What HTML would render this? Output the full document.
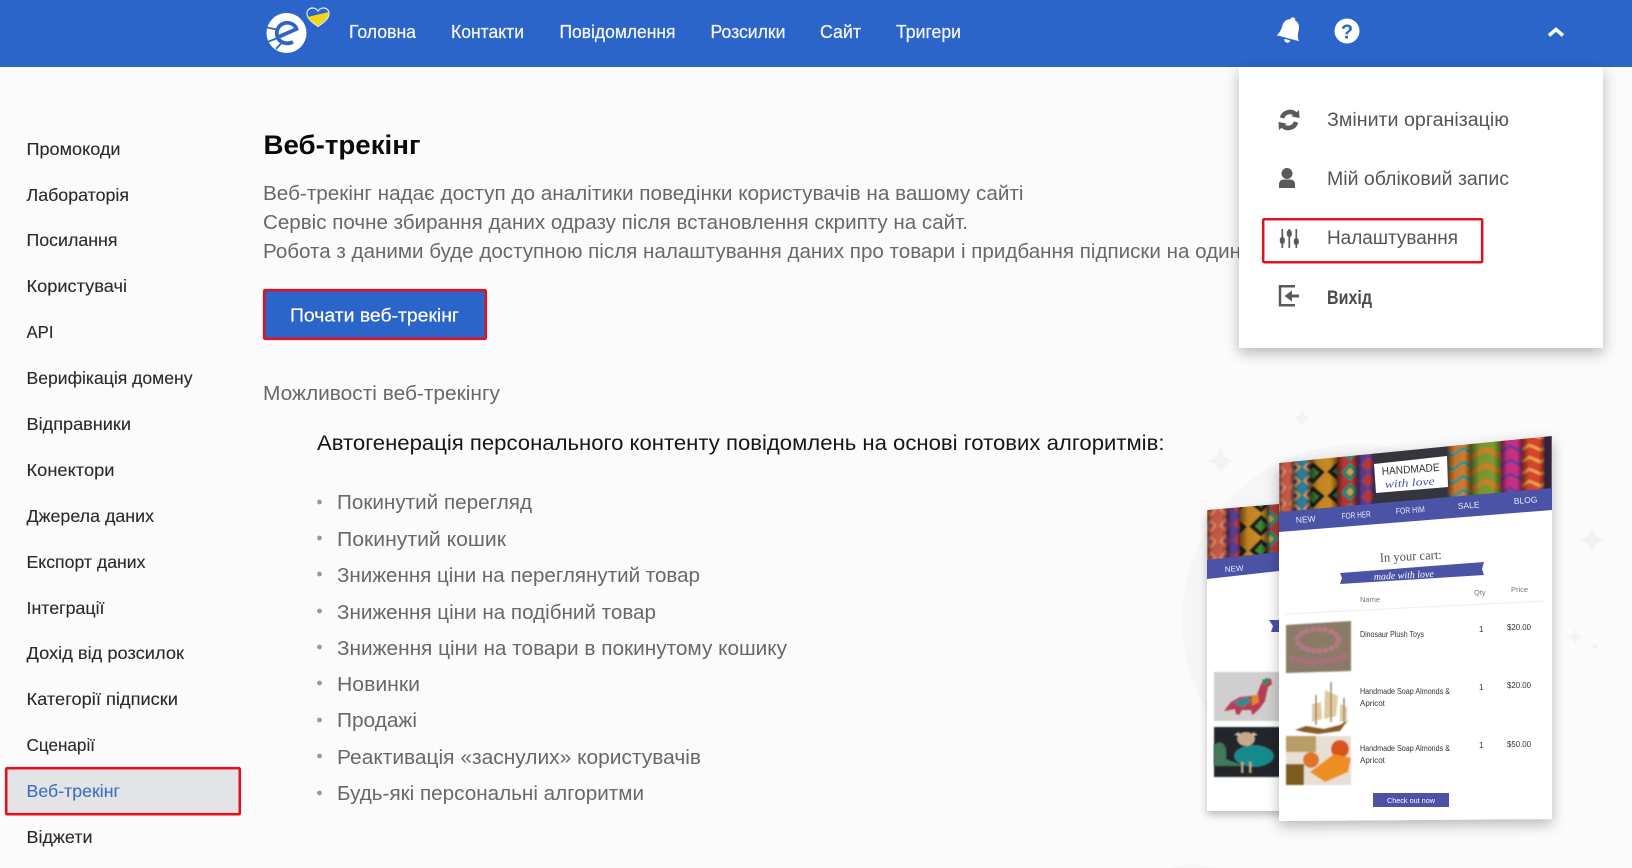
<!DOCTYPE html>
<html lang="uk"><head><meta charset="utf-8"><title>Веб-трекінг</title>
<style>
html,body{margin:0;padding:0;width:1632px;height:868px;overflow:hidden;background:#fbfbfc}
svg{display:block;position:absolute;left:0;top:0}
text{font-family:"Liberation Sans",sans-serif}
.s{font-size:17.5px;fill:#2a2a2a;stroke:#2a2a2a;stroke-width:.12px}
.p{font-size:20px;fill:#686868}
.n{font-size:18.5px;fill:#f2f6fd;stroke:#f2f6fd;stroke-width:.25px}
.d{font-size:19px;fill:#555}
</style></head><body>
<svg width="1632" height="868" viewBox="0 0 1632 868" xmlns="http://www.w3.org/2000/svg">
<defs>
<filter id="sh" x="-20%" y="-20%" width="140%" height="140%"><feDropShadow dx="0" dy="5" stdDeviation="7" flood-color="#000" flood-opacity=".28"/></filter>
<filter id="sh2" x="-20%" y="-20%" width="140%" height="140%"><feDropShadow dx="0" dy="4" stdDeviation="4" flood-color="#000" flood-opacity=".25"/></filter>
<filter id="b"><feGaussianBlur stdDeviation=".9"/></filter>
<linearGradient id="roll"><stop offset="0" stop-color="#000" stop-opacity=".5"/><stop offset=".3" stop-color="#000" stop-opacity=".05"/><stop offset=".75" stop-color="#000" stop-opacity="0"/><stop offset="1" stop-color="#000" stop-opacity=".45"/></linearGradient>
<pattern id="k1" width="14" height="16" patternUnits="userSpaceOnUse" patternTransform="skewY(-5)"><rect width="14" height="16" fill="#c65a4a"/><path d="M7 1l6 7-6 7-6-7z" fill="#d9884f"/><path d="M7 5l3 3-3 3-3-3z" fill="#b05088"/></pattern>
<pattern id="k2" width="14" height="14" patternUnits="userSpaceOnUse" patternTransform="skewY(-5)"><rect width="14" height="14" fill="#2f7f98"/><path d="M7 1l6 6-6 6-6-6z" fill="#d49a35"/><path d="M7 4l3 3-3 3-3-3z" fill="#5a3f8a"/></pattern>
<pattern id="k3" width="26" height="24" patternUnits="userSpaceOnUse" patternTransform="skewY(-5)"><rect width="26" height="24" fill="#c98a24"/><path d="M13 1l12 11-12 11L1 12z" fill="#1e1e18"/><path d="M13 6l6 6-6 6-6-6z" fill="#3d8a3a"/></pattern>
<pattern id="k4" width="20" height="20" patternUnits="userSpaceOnUse" patternTransform="skewY(-5)"><rect width="20" height="20" fill="#b53a32"/><path d="M10 1l9 9-9 9-9-9z" fill="#1f8a7a"/><path d="M10 6l4 4-4 4-4-4z" fill="#d8a038"/></pattern>
<pattern id="k5" width="16" height="16" patternUnits="userSpaceOnUse" patternTransform="skewY(-5)"><rect width="16" height="16" fill="#5c3e90"/><path d="M8 1l7 7-7 7-7-7z" fill="#b5383c"/></pattern>
<pattern id="k6" width="22" height="14" patternUnits="userSpaceOnUse" patternTransform="skewY(-5)"><rect width="22" height="14" fill="#d17a2a"/><path d="M0 9l11-7 11 7" fill="none" stroke="#1f9a94" stroke-width="3"/></pattern>
<pattern id="k7" width="30" height="16" patternUnits="userSpaceOnUse" patternTransform="skewY(-5)"><rect width="30" height="16" fill="#7f9a30"/><path d="M0 11l15-8 15 8" fill="none" stroke="#dd7a26" stroke-width="4"/></pattern>
<pattern id="k8" width="20" height="14" patternUnits="userSpaceOnUse" patternTransform="skewY(-5)"><rect width="20" height="14" fill="#cc2f86"/><path d="M0 10l10-6 10 6" fill="none" stroke="#6b3f9a" stroke-width="3"/></pattern>
<pattern id="k9" width="23" height="12" patternUnits="userSpaceOnUse" patternTransform="skewY(-5)"><rect width="23" height="12" fill="#d8452f"/><path d="M0 9l11.500-6 11.500 6" fill="none" stroke="#efa24a" stroke-width="3"/></pattern>
<clipPath id="hf"><polygon points="1279,463 1552,436 1552,490 1279,514"/></clipPath>
<clipPath id="hb"><polygon points="1207,510 1279,504 1279,554 1207,562"/></clipPath>
</defs>

<!-- background illustration -->
<circle cx="1358" cy="620" r="176" fill="#f6f6f7"/>
<path d="M1168 868q25-7 50 0z" fill="#f6f6f7"/>
<g fill="#f3f3f5">
<path d="M1221 447q2 12 14 14q-12 2-14 14q-2-12-14-14q12-2 14-14z"/>
<path d="M1302 408q1 8 9 10q-8 2-9 10q-1-8-9-10q8-2 9-10z"/>
<path d="M1592 526q2 12 13 14q-11 2-13 15q-2-13-13-15q11-2 13-14z"/>
<path d="M1575 628q1 8 9 9q-8 1-9 9q-1-8-9-9q8-1 9-9z"/>
<circle cx="1595" cy="646" r="3"/>
</g>

<!-- back email card -->
<g filter="url(#sh2)"><polygon points="1207,510 1290,503 1290,811 1207,811" fill="#fff"/></g>
<g clip-path="url(#hb)" filter="url(#b)">
<rect x="1207" y="500" width="20" height="70" fill="url(#k1)"/><rect x="1207" y="500" width="20" height="70" fill="url(#roll)"/>
<rect x="1227" y="500" width="13" height="70" fill="url(#k5)"/><rect x="1227" y="500" width="13" height="70" fill="url(#roll)"/>
<rect x="1240" y="500" width="27" height="70" fill="url(#k3)"/><rect x="1240" y="500" width="27" height="70" fill="url(#roll)"/>
<rect x="1267" y="500" width="14" height="70" fill="url(#k4)"/><rect x="1267" y="500" width="14" height="70" fill="url(#roll)"/>
</g>
<polygon points="1207,560 1279,552 1279,571 1207,579" fill="#4a53a6"/>
<text x="1225" y="572" font-size="8" fill="#e8e9f6" transform="rotate(-4 1225 572)">NEW</text>
<polygon points="1269,620 1279,620 1279,632 1271,632 1273,626" fill="#4a53a6"/>
<rect x="1214" y="672" width="68" height="49" fill="#cfcfcf" filter="url(#b)"/>
<g filter="url(#b)">
<path d="M1224 711l7-9 9-5 11-1 6-1 4-11 5-6 5 1 1 5-4 3-3 14-5 7-5 5-3 2-1-5-9 0-3 5-3-1-1-5-5 1z" fill="#b83a55"/>
<path d="M1233 703l13-6 6 3-9 7z" fill="#2e8a92"/>
<path d="M1252 696l6-2 1 8-7 4z" fill="#e0872a"/>
<path d="M1262 680l6-2 1 4-5 4z" fill="#2f8a5a"/>
</g>
<rect x="1214" y="727" width="68" height="50" fill="#22282b" filter="url(#b)"/>
<g filter="url(#b)">
<ellipse cx="1254" cy="756" rx="20" ry="11" fill="#168a8a"/>
<path d="M1214 745c10-8 14 4 12 14l18 7h-30z" fill="#3f7a5a"/>
<ellipse cx="1246" cy="739" rx="9" ry="7" fill="#c5a78c"/>
<path d="M1234 735l5-3 1 4zM1258 735l-5-3-1 4z" fill="#d9c4ad"/>
<rect x="1241" y="762" width="2.500" height="11" fill="#bda388"/><rect x="1249" y="762" width="2.500" height="11" fill="#bda388"/>
</g>

<!-- front email card -->
<g filter="url(#sh)"><polygon points="1279,463 1552,436 1552,819 1279,821" fill="#fff"/></g>
<g clip-path="url(#hf)" filter="url(#b)">
<rect x="1279" y="430" width="14" height="90" fill="url(#k1)"/><rect x="1279" y="430" width="14" height="90" fill="url(#roll)"/>
<rect x="1293" y="430" width="17" height="90" fill="url(#k2)"/><rect x="1293" y="430" width="17" height="90" fill="url(#roll)"/>
<rect x="1310" y="430" width="27" height="90" fill="url(#k3)"/><rect x="1310" y="430" width="27" height="90" fill="url(#roll)"/>
<rect x="1337" y="430" width="20" height="90" fill="url(#k4)"/><rect x="1337" y="430" width="20" height="90" fill="url(#roll)"/>
<rect x="1357" y="430" width="17" height="90" fill="url(#k5)"/><rect x="1357" y="430" width="17" height="90" fill="url(#roll)"/>
<rect x="1374" y="430" width="74" height="90" fill="#34343c"/>
<rect x="1448" y="430" width="22" height="90" fill="url(#k6)"/><rect x="1448" y="430" width="22" height="90" fill="url(#roll)"/>
<rect x="1470" y="430" width="31" height="90" fill="url(#k7)"/><rect x="1470" y="430" width="31" height="90" fill="url(#roll)"/>
<rect x="1501" y="430" width="21" height="90" fill="url(#k8)"/><rect x="1501" y="430" width="21" height="90" fill="url(#roll)"/>
<rect x="1522" y="430" width="22" height="90" fill="url(#k9)"/><rect x="1522" y="430" width="22" height="90" fill="url(#roll)"/>
<rect x="1544" y="430" width="8" height="90" fill="#33213a"/>
</g>
<polygon points="1374,464 1447,456 1448,487 1376,493" fill="#fff"/>
<text x="1382" y="475" font-size="11" fill="#333" textLength="58" lengthAdjust="spacingAndGlyphs" transform="rotate(-4 1382 475)">HANDMADE</text>
<text x="1385" y="488" font-size="11" font-style="italic" fill="#4a53a6" textLength="50" lengthAdjust="spacingAndGlyphs" style="font-family:'Liberation Serif',serif" transform="rotate(-4 1385 488)">with love</text>
<polygon points="1279,512 1552,488 1552,510 1279,532" fill="#4a53a6"/>
<g font-size="8.5" fill="#e8e9f6">
<text x="1296" y="523" transform="rotate(-4 1296 523)">NEW</text>
<text x="1342" y="519" transform="rotate(-4 1342 519)" textLength="29" lengthAdjust="spacingAndGlyphs">FOR HER</text>
<text x="1396" y="514" transform="rotate(-4 1396 514)" textLength="29" lengthAdjust="spacingAndGlyphs">FOR HIM</text>
<text x="1458" y="509" transform="rotate(-4 1458 509)">SALE</text>
<text x="1514" y="504" transform="rotate(-4 1514 504)">BLOG</text>
</g>
<text x="1380" y="562" font-size="13" fill="#555" textLength="62" lengthAdjust="spacingAndGlyphs" style="font-family:'Liberation Serif',serif" transform="rotate(-3 1380 562)">In your cart:</text>
<polygon points="1340,573 1484,562 1482,569 1484,575 1340,584 1342,578" fill="#4a53a6"/>
<text x="1374" y="580" font-size="10" font-style="italic" fill="#fff" textLength="60" lengthAdjust="spacingAndGlyphs" style="font-family:'Liberation Serif',serif" transform="rotate(-3 1374 580)">made with love</text>
<g font-size="7.5" fill="#777">
<text x="1360" y="602">Name</text>
<text x="1474" y="595">Qty</text>
<text x="1511" y="592">Price</text>
</g>
<line x1="1285" y1="614" x2="1545" y2="601" stroke="#eee"/>
<g filter="url(#b)">
<polygon points="1286,625 1351,621 1351,671 1286,673" fill="#8a7a66"/>
<ellipse cx="1318" cy="640" rx="21" ry="11" fill="none" stroke="#b07a82" stroke-width="6" stroke-dasharray="0 6" stroke-linecap="round"/>
<path d="M1292 658c14 6 40 6 56-4" fill="none" stroke="#a8707a" stroke-width="6" stroke-dasharray="0 6" stroke-linecap="round"/>
<path d="M1306 726l18 3 16-4 8-5-8 11-22 3-14-2-9-2z" fill="#8a5a2a"/>
<path d="M1312 704l9-2 1 17-10 3zM1325 690l13 6-2 20-12 3zM1340 704l7 3 0 13-7 2z" fill="#e0c9a0"/>
<path d="M1316 695v30M1331 682v40M1344 698v24" stroke="#6a4a25" stroke-width="1"/>
<rect x="1286" y="736" width="65" height="49" fill="#e6dfd4"/>
<rect x="1286" y="736" width="30" height="16" fill="#b89d66"/>
<circle cx="1340" cy="749" r="9" fill="#d9531e"/>
<circle cx="1311" cy="760" r="8" fill="#e0752a"/>
<polygon points="1310,772 1334,754 1351,758 1348,772 1325,782" fill="#ec8e22"/>
<rect x="1286" y="764" width="18" height="21" fill="#7a5d1e"/>
</g>
<g font-size="8" fill="#333">
<text x="1360" y="637" textLength="64" lengthAdjust="spacingAndGlyphs">Dinosaur Plush Toys</text>
<text x="1360" y="694" textLength="90" lengthAdjust="spacingAndGlyphs">Handmade Soap Almonds &amp;</text>
<text x="1360" y="706">Apricot</text>
<text x="1360" y="751" textLength="90" lengthAdjust="spacingAndGlyphs">Handmade Soap Almonds &amp;</text>
<text x="1360" y="763">Apricot</text>
<text x="1479" y="632">1</text><text x="1507" y="630" textLength="24" lengthAdjust="spacingAndGlyphs">$20.00</text>
<text x="1479" y="690">1</text><text x="1507" y="688" textLength="24" lengthAdjust="spacingAndGlyphs">$20.00</text>
<text x="1479" y="748">1</text><text x="1507" y="747" textLength="24" lengthAdjust="spacingAndGlyphs">$50.00</text>
</g>
<rect x="1373" y="793" width="76" height="14" fill="#4a53a6"/>
<text x="1387" y="803" font-size="7.5" fill="#fff" textLength="48" lengthAdjust="spacingAndGlyphs">Check out now</text>

<!-- header -->
<rect width="1632" height="67" fill="#2b65c9"/>
<!-- logo -->
<g>
<circle cx="286.500" cy="33" r="20" fill="#fff"/>
<path d="M267 27.500l9.500 2M268.500 41.500l9-3.500M276 49l5-5.500" fill="none" stroke="#2b65c9" stroke-width="1.800"/>
<path d="M279.500 36.500l17-7.500c-1.500-5-8-7.500-13-5.500-5.500 2-8 8-6 13.500 2 5.500 9 8 15.500 5" fill="none" stroke="#2b65c9" stroke-width="3.800"/>
<path d="M318 26.500c-4-3-11-7-11-13 0-3.500 2.500-5.500 5.500-5.500 2.500 0 4.500 1.500 5.500 3 1-1.500 3-3 5.500-3 3 0 5.500 2 5.500 5.500 0 6-7 10-11 13z" fill="#2b65c9" stroke="#e8eef8" stroke-width="1.200"/>
<path d="M307.500 17l21.500-5c.4 6-6.500 10-11 13.800-4-3-9-5-10.500-8.800z" fill="#f7d51d"/>
</g>
<!-- nav -->
<g class="nav">
<text class="n" x="349" y="38" textLength="67" lengthAdjust="spacingAndGlyphs">Головна</text>
<text class="n" x="451" y="38" textLength="73" lengthAdjust="spacingAndGlyphs">Контакти</text>
<text class="n" x="559.500" y="38" textLength="116" lengthAdjust="spacingAndGlyphs">Повідомлення</text>
<text class="n" x="710.500" y="38" textLength="75" lengthAdjust="spacingAndGlyphs">Розсилки</text>
<text class="n" x="820" y="38" textLength="41" lengthAdjust="spacingAndGlyphs">Сайт</text>
<text class="n" x="896" y="38" textLength="65" lengthAdjust="spacingAndGlyphs">Тригери</text>
</g>
<!-- bell -->
<g transform="translate(1290 30) rotate(15)" fill="#fff">
<path d="M0-13c1.500 0 2.500 1 2.500 2.500 4 1 6 4.500 6 8.500 0 5 1 7.500 3 10.500h-23c2-3 3-5.500 3-10.500 0-4 2-7.500 6-8.500 0-1.500 1-2.500 2.500-2.500z"/>
<path d="M-3 10h6c0 2-1.300 3-3 3s-3-1-3-3z"/>
</g>
<!-- help -->
<circle cx="1347" cy="31" r="12.500" fill="#fff"/>
<text x="1347" y="38.500" font-size="20" font-weight="bold" fill="#2b65c9" text-anchor="middle">?</text>
<!-- chevron -->
<path d="M1549 35.500l7-6 7 6" fill="none" stroke="#fff" stroke-width="3.600"/>

<!-- sidebar -->
<rect x="6.200" y="768.200" width="233.600" height="46" fill="#e3e4e5" stroke="#e0121f" stroke-width="2.600" rx="1"/>
<g>
<text class="s" x="26.500" y="155" textLength="94" lengthAdjust="spacingAndGlyphs">Промокоди</text>
<text class="s" x="26.500" y="201" textLength="102.500" lengthAdjust="spacingAndGlyphs">Лабораторія</text>
<text class="s" x="26.500" y="246" textLength="91" lengthAdjust="spacingAndGlyphs">Посилання</text>
<text class="s" x="26.500" y="292" textLength="100.500" lengthAdjust="spacingAndGlyphs">Користувачі</text>
<text class="s" x="26.500" y="338" textLength="27" lengthAdjust="spacingAndGlyphs">API</text>
<text class="s" x="26.500" y="384" textLength="166" lengthAdjust="spacingAndGlyphs">Верифікація домену</text>
<text class="s" x="26.500" y="430" textLength="104.500" lengthAdjust="spacingAndGlyphs">Відправники</text>
<text class="s" x="26.500" y="476" textLength="88" lengthAdjust="spacingAndGlyphs">Конектори</text>
<text class="s" x="26.500" y="522" textLength="127.500" lengthAdjust="spacingAndGlyphs">Джерела даних</text>
<text class="s" x="26.500" y="568" textLength="119" lengthAdjust="spacingAndGlyphs">Експорт даних</text>
<text class="s" x="26.500" y="614" textLength="78" lengthAdjust="spacingAndGlyphs">Інтеграції</text>
<text class="s" x="26.500" y="659" textLength="157.500" lengthAdjust="spacingAndGlyphs">Дохід від розсилок</text>
<text class="s" x="26.500" y="705" textLength="151.500" lengthAdjust="spacingAndGlyphs">Категорії підписки</text>
<text class="s" x="26.500" y="751" textLength="68.500" lengthAdjust="spacingAndGlyphs">Сценарії</text>
<text class="s" x="26.500" y="797" textLength="93.500" lengthAdjust="spacingAndGlyphs" style="fill:#3f6fc4;stroke:#3f6fc4">Веб-трекінг</text>
<text class="s" x="26.500" y="843" textLength="66" lengthAdjust="spacingAndGlyphs">Віджети</text>
</g>

<!-- main -->
<text x="263.500" y="154" font-size="26.500" font-weight="bold" fill="#0a0a0a" textLength="157" lengthAdjust="spacingAndGlyphs">Веб-трекінг</text>
<text class="p" x="263" y="200" textLength="760.500" lengthAdjust="spacingAndGlyphs">Веб-трекінг надає доступ до аналітики поведінки користувачів на вашому сайті</text>
<text class="p" x="263" y="229" textLength="705" lengthAdjust="spacingAndGlyphs">Сервіс почне збирання даних одразу після встановлення скрипту на сайт.</text>
<text class="p" x="263" y="258" textLength="978" lengthAdjust="spacingAndGlyphs">Робота з даними буде доступною після налаштування даних про товари і придбання підписки на один</text>
<rect x="264.200" y="290.200" width="221.600" height="48.600" rx="1" fill="#2b65c9" stroke="#e0121f" stroke-width="2.600"/>
<text x="290" y="321.500" font-size="18.500" fill="#fff" stroke="#fff" stroke-width=".2" textLength="169" lengthAdjust="spacingAndGlyphs">Почати веб-трекінг</text>
<text class="p" x="263" y="400" textLength="237" lengthAdjust="spacingAndGlyphs">Можливості веб-трекінгу</text>
<text x="317" y="450" font-size="21" fill="#161616" textLength="847.500" lengthAdjust="spacingAndGlyphs">Автогенерація персонального контенту повідомлень на основі готових алгоритмів:</text>
<g fill="#999">
<circle cx="319.500" cy="502" r="2.400"/><circle cx="319.500" cy="538" r="2.400"/><circle cx="319.500" cy="574" r="2.400"/>
<circle cx="319.500" cy="611" r="2.400"/><circle cx="319.500" cy="647" r="2.400"/><circle cx="319.500" cy="683" r="2.400"/>
<circle cx="319.500" cy="720" r="2.400"/><circle cx="319.500" cy="756" r="2.400"/><circle cx="319.500" cy="793" r="2.400"/>
</g>
<text class="p" x="337" y="509" textLength="195" lengthAdjust="spacingAndGlyphs">Покинутий перегляд</text>
<text class="p" x="337" y="546" textLength="169" lengthAdjust="spacingAndGlyphs">Покинутий кошик</text>
<text class="p" x="337" y="582" textLength="363" lengthAdjust="spacingAndGlyphs">Зниження ціни на переглянутий товар</text>
<text class="p" x="337" y="619" textLength="319" lengthAdjust="spacingAndGlyphs">Зниження ціни на подібний товар</text>
<text class="p" x="337" y="655" textLength="450" lengthAdjust="spacingAndGlyphs">Зниження ціни на товари в покинутому кошику</text>
<text class="p" x="337" y="691" textLength="83" lengthAdjust="spacingAndGlyphs">Новинки</text>
<text class="p" x="337" y="727" textLength="80" lengthAdjust="spacingAndGlyphs">Продажі</text>
<text class="p" x="337" y="764" textLength="364" lengthAdjust="spacingAndGlyphs">Реактивація «заснулих» користувачів</text>
<text class="p" x="337" y="800" textLength="307" lengthAdjust="spacingAndGlyphs">Будь-які персональні алгоритми</text>

<!-- dropdown -->
<g filter="url(#sh)"><rect x="1239" y="67" width="364" height="281" fill="#fff"/></g>
<rect x="1263.200" y="219.200" width="219" height="43" fill="none" stroke="#e0121f" stroke-width="2.500" rx="1"/>
<text class="d" x="1327" y="126" textLength="182" lengthAdjust="spacingAndGlyphs">Змінити організацію</text>
<text class="d" x="1327" y="185" textLength="182" lengthAdjust="spacingAndGlyphs">Мій обліковий запис</text>
<text class="d" x="1327" y="244" textLength="131" lengthAdjust="spacingAndGlyphs">Налаштування</text>
<text class="d" x="1327" y="304" font-weight="bold" textLength="45" lengthAdjust="spacingAndGlyphs" style="fill:#4a4a4a">Вихід</text>
<!-- refresh -->
<g fill="none" stroke="#5a5a5a" stroke-width="4.600">
<path d="M1282 118a8 8 0 0 1 13.500-3.500"/>
<path d="M1296 122a8 8 0 0 1-13.500 3.500"/>
</g>
<path d="M1291.500 116.500l8 1.500-.5-8zM1286.500 123.500l-8-1.500 .5 8z" fill="#5a5a5a"/>
<!-- person -->
<circle cx="1287" cy="173.500" r="5.500" fill="#5a5a5a"/>
<path d="M1279 188v-4c0-2.500 2-4.500 4.500-4.500h7c2.500 0 4.500 2 4.500 4.500v4z" fill="#5a5a5a"/>
<!-- sliders -->
<g fill="#5a5a5a">
<path d="M1282.300 229v19M1289.300 229v19M1296.300 229v19" fill="none" stroke="#5a5a5a" stroke-width="1.700"/>
<rect x="1279.800" y="237" width="5" height="7" rx="2.500"/>
<rect x="1286.800" y="230" width="5" height="7" rx="2.500"/>
<rect x="1293.800" y="238" width="5" height="7" rx="2.500"/>
</g>
<!-- logout -->
<path d="M1295 286.200h-15v19h15" fill="none" stroke="#5a5a5a" stroke-width="2.500"/>
<path d="M1299 294.500h-7v-4l-7.500 5.500 7.500 5.500v-4h7z" fill="#5a5a5a"/>
</svg>
</body></html>
